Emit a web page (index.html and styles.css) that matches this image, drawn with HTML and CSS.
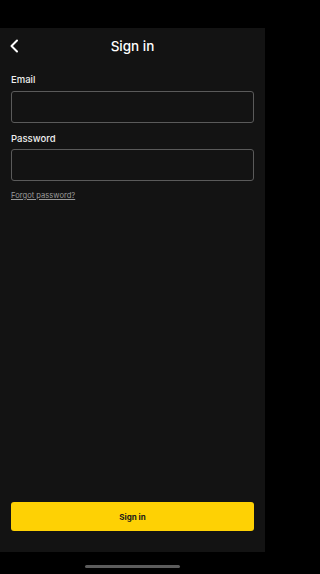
FILE: index.html
```html
<!DOCTYPE html>
<html lang="en">
<head>
<meta charset="utf-8">
<title>Sign in</title>
<link rel="stylesheet" href="styles.css">
</head>
<body>
<div class="screen">
  <div class="status-bar"></div>
  <main class="app">
    <header class="nav">
      <button class="back" aria-label="Back">
        <svg width="10" height="14" viewBox="0 0 10 14"><path d="M8 1.5 L2.5 7 L8 12.5" fill="none" stroke="#fff" stroke-width="2" stroke-linecap="round" stroke-linejoin="round"/></svg>
      </button>
      <h1 class="title">Sign in</h1>
    </header>
    <form class="form">
      <label class="field">
        <span class="label">Email</span>
        <input class="input" type="email">
      </label>
      <label class="field">
        <span class="label">Password</span>
        <input class="input" type="password">
      </label>
      <a class="forgot" href="#">Forgot password?</a>
    </form>
    <div class="footer">
      <button class="primary">Sign in</button>
    </div>
  </main>
  <div class="home-area"><div class="home-indicator"></div></div>
</div>
</body>
</html>
```
FILE: styles.css
```css
* { box-sizing: border-box; }
html, body { margin: 0; padding: 0; background: #000; }
body { font-family: Inter, "Noto Sans", "Liberation Sans", sans-serif; color: #fff; }
.screen { width: 265px; height: 574px; display: flex; flex-direction: column; }
.status-bar { height: 28px; background: #000; flex: none; }
.app { flex: 1; background: #131313; display: flex; flex-direction: column; }
.nav { height: 36px; position: relative; display: flex; align-items: center; justify-content: center; }
.back { position: absolute; left: 9px; top: 11px; background: none; border: 0; padding: 0; width: 12px; height: 14px; display: flex; }
.title { margin: 0; font-size: 13.5px; font-weight: 500; letter-spacing: 0; }
.form { padding: 0 11px; display: flex; flex-direction: column; }
.field { display: flex; flex-direction: column; }
.label { font-size: 9.5px; font-weight: 500; color: #eee; margin-top: 10px; line-height: 12px; }
.input { margin-top: 5px; height: 32px; background: transparent; border: 1.3px solid #5a5a5a; border-radius: 3px; }
.field + .field .label { margin-top: 10px; }
.field + .field .input { margin-top: 4px; }
.forgot { margin-top: 10px; font-size: 7.6px; color: #9a9a9a; text-decoration: underline; line-height: 10px; }
.footer { margin-top: auto; padding: 0 11px 21px; }
.primary { width: 100%; height: 29px; border: 0; border-radius: 3px; background: #fed104; color: #1a1a1a; font-family: inherit; font-size: 8px; font-weight: 700; }
.home-area { height: 22px; background: #000; flex: none; display: flex; justify-content: center; padding-top: 13px; }
.home-indicator { width: 95px; height: 3px; border-radius: 2px; background: #5c5c5c; }
```
